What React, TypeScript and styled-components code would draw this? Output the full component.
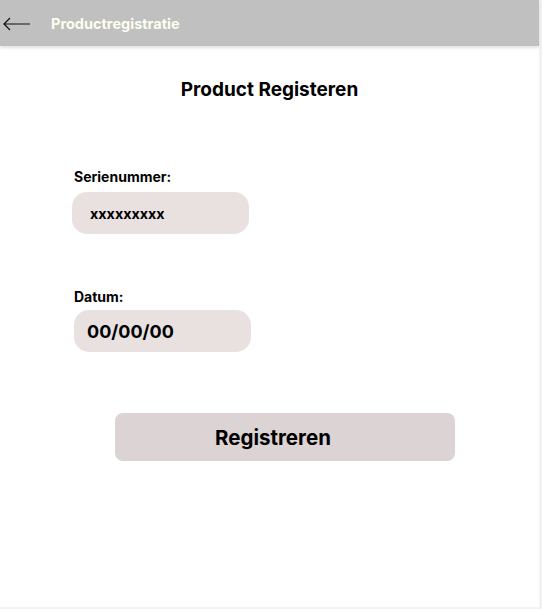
import React from "react";
import styled, { createGlobalStyle } from "styled-components";

const Global = createGlobalStyle`
  html, body { margin: 0; padding: 0; background: #f2f2f2; }
  body { font-family: Inter, "Open Sans", sans-serif; }
  * { box-sizing: border-box; }
`;

const Screen = styled.div`
  width: 539px;
  height: 607px;
  background: #ffffff;
  display: flex;
  flex-direction: column;
`;

const Header = styled.header`
  height: 46px;
  background: #c0c0c0;
  box-shadow: 0 2px 3px rgba(0, 0, 0, 0.12);
  display: flex;
  align-items: center;
  padding-left: 3px;
  padding-top: 1px;
  gap: 21px;
`;

const BackButton = styled.button`
  border: 0;
  background: none;
  padding: 0;
  display: flex;
  width: 27px;
  height: 14px;
  cursor: pointer;
`;

const HeaderTitle = styled.h1`
  margin: 0;
  font-size: 14.5px;
  font-weight: 700;
  color: #fdfdf0;
`;

const Content = styled.main`
  display: flex;
  flex-direction: column;
  padding-top: 32px;
`;

const PageTitle = styled.h2`
  margin: 0;
  text-align: center;
  font-size: 19px;
  font-weight: 700;
  color: #000;
  line-height: 24px;
`;

const Field = styled.div<{ $top: number; $left: number }>`
  display: flex;
  flex-direction: column;
  align-items: flex-start;
  margin-top: ${(p) => p.$top}px;
  margin-left: ${(p) => p.$left}px;
`;

const Label = styled.label<{ $indent: number; $gap: number }>`
  font-size: 14px;
  font-weight: 700;
  color: #000;
  line-height: 16px;
  margin-left: ${(p) => p.$indent}px;
  margin-bottom: ${(p) => p.$gap}px;
`;

const Pill = styled.div<{ $size: number; $pad: number }>`
  width: 177px;
  height: 42px;
  border-radius: 15px;
  background: #e8e1e0;
  display: flex;
  align-items: center;
  padding-left: ${(p) => p.$pad}px;
  font-size: ${(p) => p.$size}px;
  font-weight: 700;
  color: #000;
`;

const SubmitButton = styled.button`
  align-self: flex-start;
  margin-left: 115px;
  margin-top: 61px;
  width: 340px;
  height: 48px;
  padding: 0 24px 0 0;
  border: 0;
  border-radius: 8px;
  background: #dbd3d4;
  font-family: inherit;
  font-size: 20.5px;
  font-weight: 700;
  color: #000;
  cursor: pointer;
`;

export default function App() {
  return (
    <>
      <Global />
      <Screen>
        <Header>
          <BackButton aria-label="Terug">
            <svg width="27" height="14" viewBox="0 0 27 14">
              <path d="M27 7H1M7 1L1 7l6 6" stroke="#111" strokeWidth="1.2" fill="none" />
            </svg>
          </BackButton>
          <HeaderTitle>Productregistratie</HeaderTitle>
        </Header>
        <Content>
          <PageTitle>Product Registeren</PageTitle>
          <Field $top={67} $left={72}>
            <Label $indent={2} $gap={7}>Serienummer:</Label>
            <Pill $size={14.3} $pad={18}>xxxxxxxxx</Pill>
          </Field>
          <Field $top={55} $left={74}>
            <Label $indent={0} $gap={5}>Datum:</Label>
            <Pill $size={18} $pad={13}>00/00/00</Pill>
          </Field>
          <SubmitButton>Registreren</SubmitButton>
        </Content>
      </Screen>
    </>
  );
}
